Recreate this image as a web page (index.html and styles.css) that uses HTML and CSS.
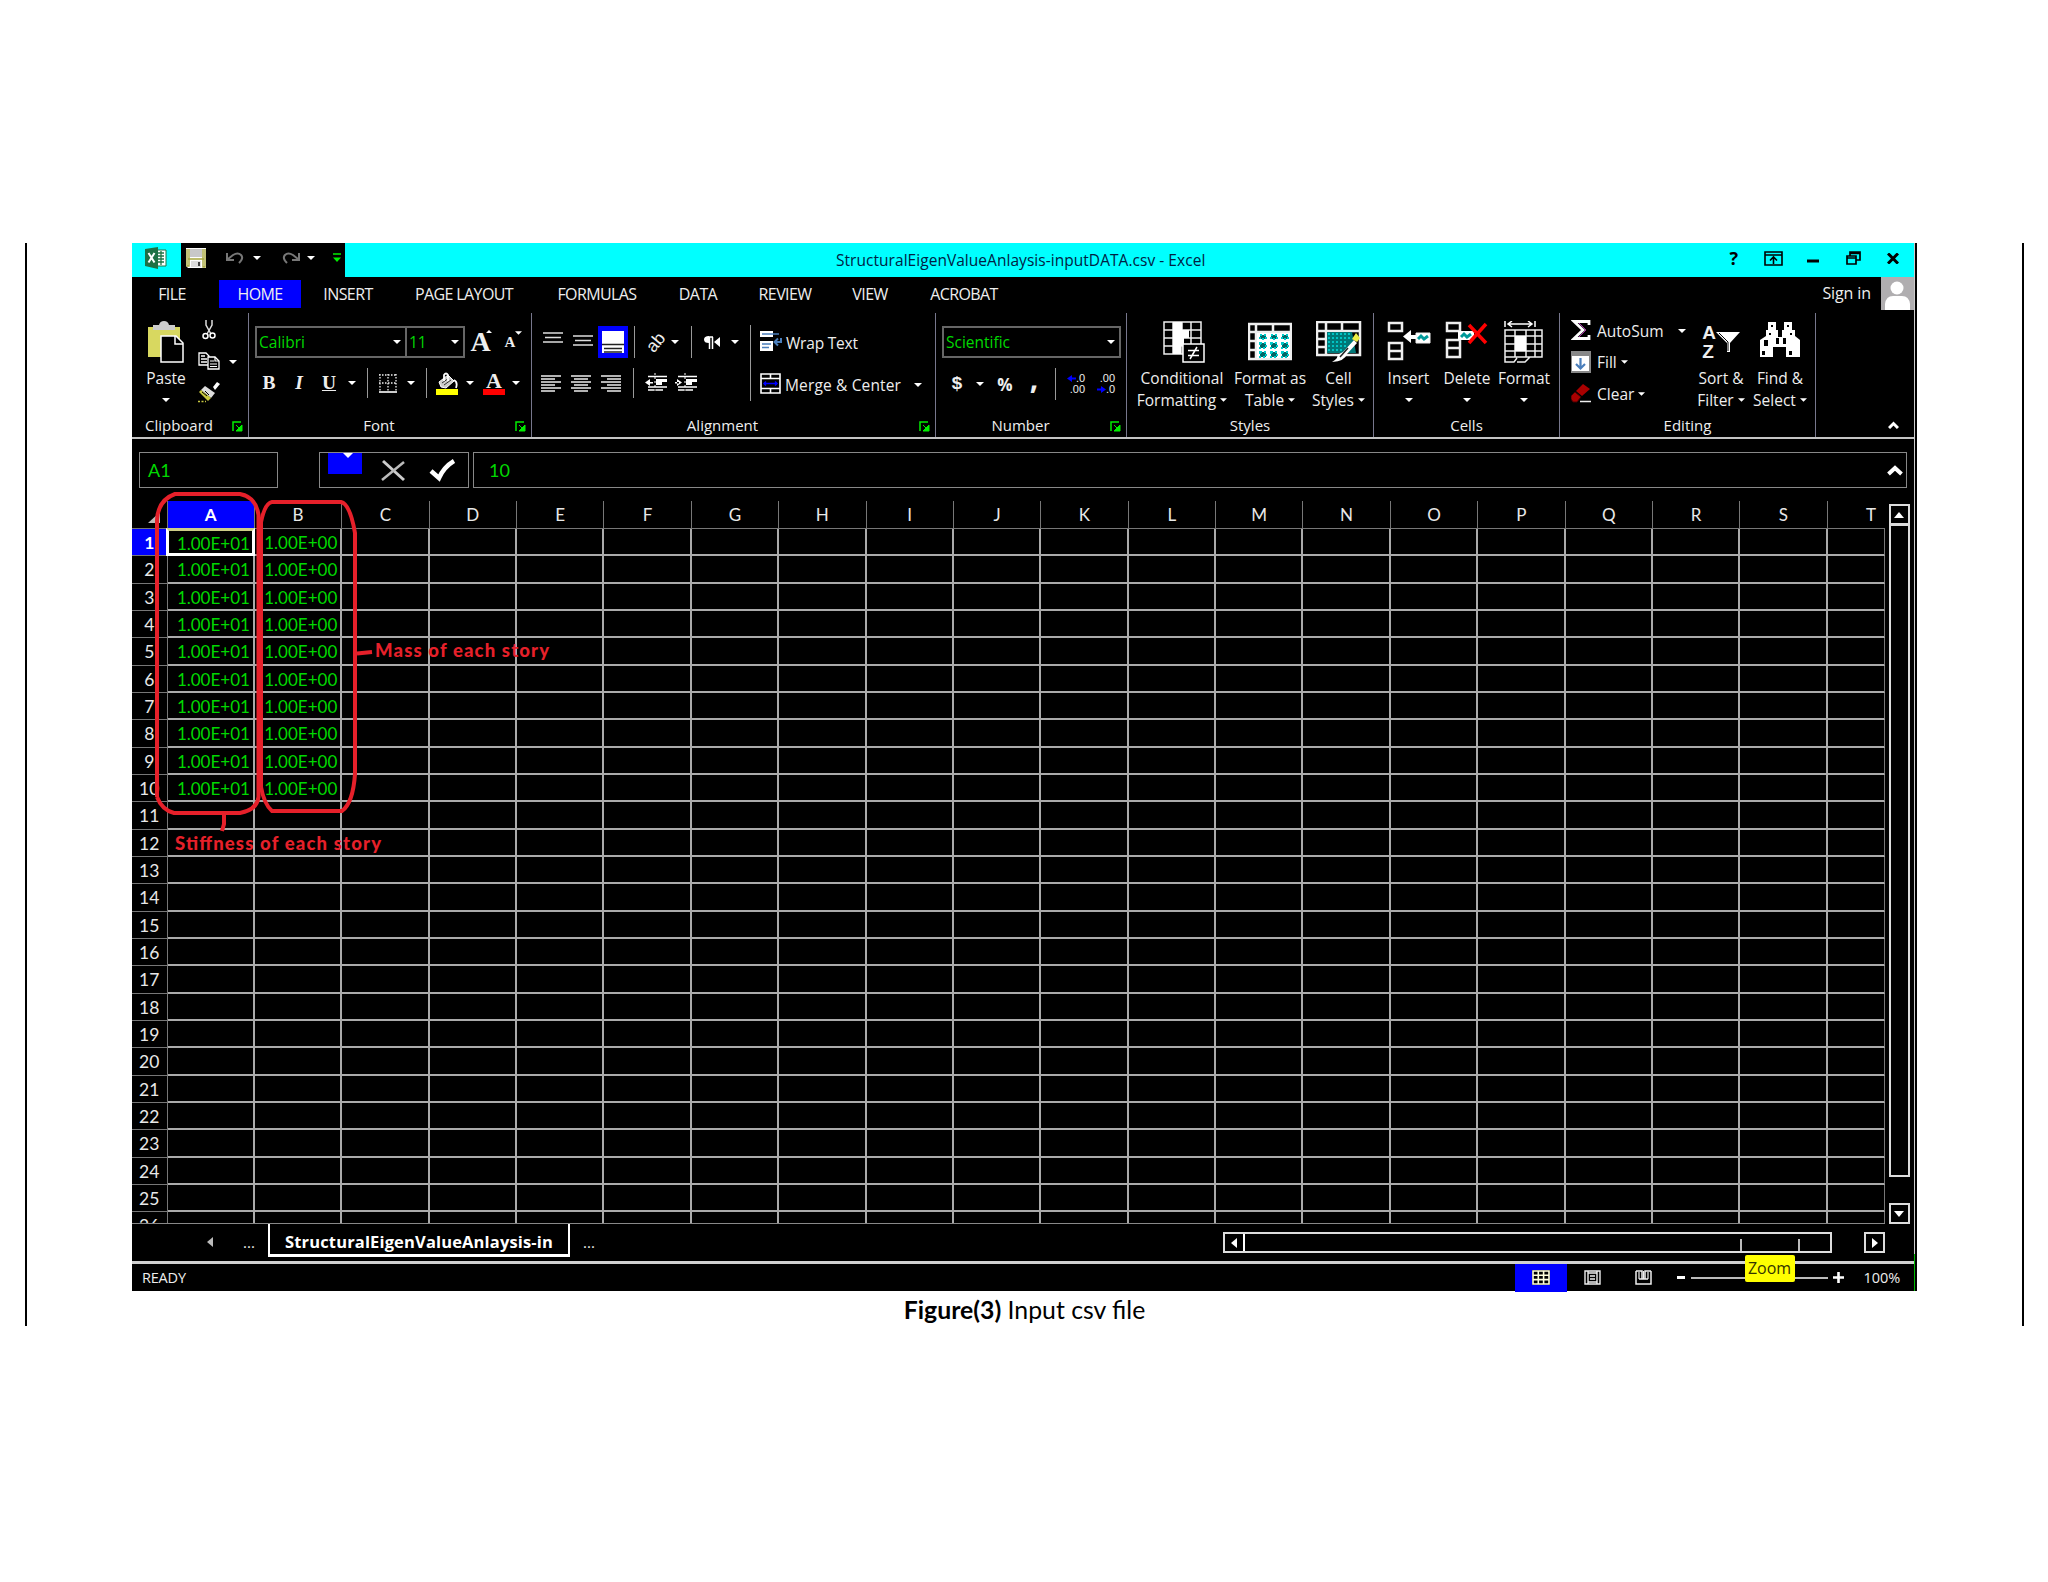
FILE: index.html
```html
<!DOCTYPE html>
<html lang="en">
<head>
  <meta charset="UTF-8">
  <title>Figure(3) Input csv file</title>
  <link rel="stylesheet" href="styles.css">
</head>
<body>

  <svg class="defs" width="0" height="0">
    <symbol id="down" viewBox="0 0 8 4"><path d="M0 0H8L4 4Z" fill="#fff"/></symbol>
    <symbol id="launch" viewBox="0 0 11 11"><path d="M1 10V1H9" fill="none" stroke="#0e0" stroke-width="1.5"/><path d="M4 4L8 8M10 4V10H4Z" fill="#0e0" stroke="#0e0"/></symbol>
  </svg>

  <main class="page">
    <div class="figure">
      <div class="window">

        <header class="titlebar">
          <div class="app-icon">
            <svg width="22" height="22" viewBox="0 0 22 22"><path d="M11 3H21V19H11Z" fill="#fff" stroke="#217346"/><path d="M13 6H19M13 9H19M13 12H19M13 15H19M16 4V18" stroke="#217346" stroke-width="1.3"/><path d="M0 2L13 0V22L0 19Z" fill="#1e7145"/><path d="M3.5 6L9.5 15.5M9.5 6L3.5 15.5" stroke="#fff" stroke-width="2"/></svg>
          </div>
          <div class="quick">
            <svg class="save" width="20" height="20" viewBox="0 0 20 20"><path d="M0 0H20V20H2L0 18Z" fill="#fff"/><path d="M1 1V18H3V1M19 1V19H17V1M2 11H18" fill="none" stroke="#a6a63c" stroke-width="1.4"/><path d="M4 1H16V9H4Z" fill="#c8c8c8"/><path d="M5 13H15V19H5Z" fill="#ddd"/><path d="M12 14H14V18H12Z" fill="#444"/></svg>
            <svg class="undo" width="18" height="12" viewBox="0 0 18 12"><path d="M1 1V8H8M2 7L7 3Q12 0 15 3Q18 6 13 11" fill="none" stroke="#777" stroke-width="2"/></svg>
            <svg class="undo-arrow" width="8" height="4"><use href="#down"/></svg>
            <svg class="redo" width="18" height="12" viewBox="0 0 18 12"><path d="M17 1V8H10M16 7L11 3Q6 0 3 3Q0 6 5 11" fill="none" stroke="#777" stroke-width="2"/></svg>
            <svg class="redo-arrow" width="8" height="4"><use href="#down"/></svg>
            <svg class="customize" width="8" height="9" viewBox="0 0 8 9"><path d="M0 1H8" stroke="#0e0" stroke-width="1.5"/><path d="M0 4.500H8L4 9Z" fill="#0e0"/></svg>
          </div>
          <div class="title">StructuralEigenValueAnlaysis-inputDATA.csv - Excel</div>
          <div class="controls">
            <b>?</b>
            <svg width="19" height="15" viewBox="0 0 19 15"><path d="M1 1H18V14H1ZM1 4H18M9.500 13V6M6 9.500L9.500 6L13 9.500" fill="none" stroke="#000" stroke-width="1.6"/></svg>
            <svg width="12" height="15" viewBox="0 0 12 15"><path d="M0 10H12" stroke="#000" stroke-width="3"/></svg>
            <svg width="15" height="14" viewBox="0 0 15 14"><path d="M1 5H10V13H1ZM1 7H10M4 5V1H14V9H10M4 2.500H14" fill="none" stroke="#000" stroke-width="1.7"/></svg>
            <svg width="12" height="11" viewBox="0 0 12 11"><path d="M1 0.500L11 10.500M11 0.500L1 10.500" stroke="#000" stroke-width="3"/></svg>
          </div>
        </header>

        <nav class="tabs">
          <span>FILE</span>
          <span class="active">HOME</span>
          <span>INSERT</span>
          <span>PAGE LAYOUT</span>
          <span>FORMULAS</span>
          <span>DATA</span>
          <span>REVIEW</span>
          <span>VIEW</span>
          <span>ACROBAT</span>
          <span class="signin">Sign in</span>
          <svg class="avatar" width="33" height="33" viewBox="0 0 33 33"><path d="M0 0H33V33H0Z" fill="#b0aeb0"/><circle cx="16" cy="11" r="6.500" fill="#fff"/><path d="M4 33V27Q5 19 12 19H21Q28 19 29 27V33Z" fill="#fff"/></svg>
        </nav>

        <section class="ribbon">
          <div class="group clipboard">
            <div class="tools">
              <div class="big">
                <svg width="38" height="42" viewBox="0 0 38 42"><path d="M1 6H33V36H1Z" fill="#d8d860"/><path d="M6 10V4H12Q13 0 17 0Q21 0 22 4H28V9H6Z" fill="#ccc"/><path d="M14 15H29L36 22V41H14Z" fill="#000" stroke="#fff" stroke-width="1.5"/><path d="M28 15V23H36" fill="none" stroke="#fff" stroke-width="1.5"/></svg>
                <span>Paste</span>
                <svg class="arrow" width="8" height="4"><use href="#down"/></svg>
              </div>
              <div class="small-col">
                <svg width="14" height="20" viewBox="0 0 14 20"><path d="M4 0V5L9 14M10 0V5L5 14" fill="none" stroke="#ddd" stroke-width="1.5"/><circle cx="3.500" cy="16" r="2.500" fill="none" stroke="#fff" stroke-width="1.500"/><circle cx="10.500" cy="15.500" r="2.500" fill="none" stroke="#fff" stroke-width="1.500"/></svg>
                <svg width="22" height="18" viewBox="0 0 22 18"><path d="M1 1H8L11 4V13H1ZM3 4H7M3 7H9M3 10H9" fill="none" stroke="#fff" stroke-width="1.300"/><path d="M10 5H17L21 9V17H10Z" fill="#000" stroke="#fff" stroke-width="1.300"/><path d="M12 9H16M12 12H19M12 14.500H19M17 5V9H21" fill="none" stroke="#fff" stroke-width="1.200"/></svg>
                <svg width="24" height="22" viewBox="0 0 24 22"><path d="M16 6L20 1L23 3L18 9Z" fill="#fff"/><path d="M8 5L18 12L14 17L4 9Z" fill="#ddd"/><path d="M4 9L14 17L11 20L2 11Z" fill="#c8c840"/><path d="M5 11L10 15M8 10L12 14" stroke="#000"/><path d="M1 20.500H9" stroke="#c8c840" stroke-width="1.500" stroke-dasharray="2 1.500"/></svg>
              </div>
              <svg class="copy-arrow" width="8" height="4"><use href="#down"/></svg>
            </div>
            <div class="caption">Clipboard<svg width="11" height="11"><use href="#launch"/></svg></div>
          </div>

          <div class="group font">
            <div class="rows">
              <div class="row row-top">
                <div class="combo">Calibri<svg width="8" height="4"><use href="#down"/></svg></div>
                <div class="combo size">11<svg width="8" height="4"><use href="#down"/></svg></div>
                <span class="grow">A<svg width="6" height="4" viewBox="0 0 6 4"><path d="M3 0L6 3H0Z" fill="#fff"/></svg></span>
                <span class="shrink">A<svg width="7" height="4"><use href="#down"/></svg></span>
              </div>
              <div class="row row-bottom">
                <b class="serif">B</b>
                <b class="serif"><i>I</i></b>
                <b class="serif"><u>U</u></b>
                <svg width="8" height="4"><use href="#down"/></svg>
                <i class="sep"></i>
                <svg width="18" height="19" viewBox="0 0 18 19"><path d="M0 1H18M0 9H18M1 0V17M9 0V17M17 0V17" stroke="#eee" stroke-width="1.300" stroke-dasharray="1.500 1.500"/><path d="M0 18H18" stroke="#fff" stroke-width="1.600"/></svg>
                <svg width="8" height="4"><use href="#down"/></svg>
                <i class="sep"></i>
                <svg width="23" height="23" viewBox="0 0 23 23"><path d="M3 10L12 3L18 9L10 16L5 15Z" fill="#ccc" stroke="#fff"/><path d="M6 11L13 6M8 13L15 8" stroke="#333"/><path d="M8 9V3Q10 0 12 3V9M18 8Q22 10 20 16" fill="none" stroke="#fff" stroke-width="1.800"/><path d="M0 17H22V23H0Z" fill="#ff0"/></svg>
                <svg width="8" height="4"><use href="#down"/></svg>
                <span class="fcolor">A</span>
                <svg width="8" height="4"><use href="#down"/></svg>
              </div>
            </div>
            <div class="caption">Font<svg width="11" height="11"><use href="#launch"/></svg></div>
          </div>

          <div class="group alignment">
            <div class="tools">
              <div class="rows">
                <div class="row row-top">
                  <svg class="valign-top" width="20" height="20" viewBox="0 0 20 20"><path d="M0 1H20M2 5.500H18M0 10H20" stroke="#ddd" stroke-width="1.600"/></svg>
                  <svg width="20" height="20" viewBox="0 0 20 20"><path d="M0 4H20M2 8.500H18M0 13H20" stroke="#ddd" stroke-width="1.600"/></svg>
                  <span class="pressed"><svg width="22" height="22" viewBox="0 0 22 22"><path d="M0 0H22V22H0Z" fill="#fff"/><path d="M0 13.500H22M2 17.500H20M2 21H20" stroke="#222" stroke-width="1.500"/></svg></span>
                  <i class="sep"></i>
                  <span class="orient">ab</span>
                  <svg width="8" height="4"><use href="#down"/></svg>
                  <i class="sep"></i>
                  <svg width="16" height="13" viewBox="0 0 16 13"><path d="M5.500 13V1H9M8.500 1V13" fill="none" stroke="#fff" stroke-width="1.500"/><path d="M5 0V7Q0 7 0 3.500Q0 0 5 0ZM16 1V11L10 6Z" fill="#fff"/></svg>
                  <svg width="8" height="4"><use href="#down"/></svg>
                </div>
                <div class="row row-bottom">
                  <svg width="20" height="17" viewBox="0 0 20 17"><path d="M0 1H20M0 4H14M0 7H20M0 10H14M0 13H20M0 16H14" stroke="#eee" stroke-width="1.600"/></svg>
                  <svg width="20" height="17" viewBox="0 0 20 17"><path d="M0 1H20M3 4H17M0 7H20M3 10H17M0 13H20M3 16H17" stroke="#eee" stroke-width="1.600"/></svg>
                  <svg width="20" height="17" viewBox="0 0 20 17"><path d="M0 1H20M6 4H20M0 7H20M6 10H20M0 13H20M6 16H20" stroke="#eee" stroke-width="1.600"/></svg>
                  <i class="sep"></i>
                  <svg width="22" height="20" viewBox="0 0 22 20"><path d="M3 3.500H22M11 7H22M3 14H22M3 17H9M11 17H18" stroke="#fff" stroke-width="1.500"/><path d="M11 6H22V9H17V12H11Z" fill="#fff"/><path d="M10 0V20" stroke="#fff" stroke-dasharray="2 2"/><path d="M0 9.500L5 6V13ZM4 9H8V10.500H4Z" fill="#fff"/></svg>
                  <svg width="22" height="20" viewBox="0 0 22 20"><path d="M3 3.500H22M11 7H22M3 14H22M3 17H9M11 17H18" stroke="#fff" stroke-width="1.500"/><path d="M11 6H22V9H17V12H11Z" fill="#fff"/><path d="M10 0V20" stroke="#fff" stroke-dasharray="2 2"/><path d="M7 9.500L2 6V13ZM0 9H4V10.500H0Z" fill="#fff"/></svg>
                </div>
              </div>
              <div class="wrap">
                <div class="wrap-row">
                  <svg width="22" height="22" viewBox="0 0 22 22"><path d="M0 1H13V7H0ZM0 11H13V21H0Z" fill="#fff"/><path d="M2 4H19M2 14H11M2 17.500H9" stroke="#4a7ebb" stroke-width="1.500"/><path d="M21 8V12H15M18 8.500L14.500 12L18 15.500" fill="none" stroke="#4a7ebb" stroke-width="2"/></svg>
                  <span>Wrap Text</span>
                </div>
                <div class="wrap-row merge">
                  <svg width="21" height="21" viewBox="0 0 21 21"><path d="M1 1H20V20H1ZM1 5.500H20M1 15.500H20M10.500 1V5M10.500 16V20" fill="none" stroke="#fff" stroke-width="1.600"/><path d="M4 10.500H17M6 8.500L4 10.500L6 12.500M15 8.500L17 10.500L15 12.500" fill="none" stroke="#00f" stroke-width="1.500"/></svg>
                  <span>Merge &amp; Center</span>
                  <svg class="arrow" width="8" height="4"><use href="#down"/></svg>
                </div>
              </div>
            </div>
            <div class="caption">Alignment<svg width="11" height="11"><use href="#launch"/></svg></div>
          </div>

          <div class="group number">
            <div class="rows">
              <div class="row row-top">
                <div class="combo">Scientific<svg width="8" height="4"><use href="#down"/></svg></div>
              </div>
              <div class="row row-bottom">
                <b class="dollar">$</b>
                <svg width="8" height="4"><use href="#down"/></svg>
                <b class="percent">%</b>
                <b class="comma">,</b>
                <i class="sep"></i>
                <span class="dec"><span><svg width="9" height="7" viewBox="0 0 9 7"><path d="M0 3.500L5 0V2.500H9V4.500H5V7Z" fill="#00f"/></svg>.0</span><span>.00</span></span>
                <span class="dec"><span>.00</span><span><svg width="9" height="7" viewBox="0 0 9 7"><path d="M9 3.500L4 0V2.500H0V4.500H4V7Z" fill="#00f"/></svg>.0</span></span>
              </div>
            </div>
            <div class="caption">Number<svg width="11" height="11"><use href="#launch"/></svg></div>
          </div>

          <div class="group styles">
            <div class="tools">
              <div class="big">
                <svg class="cond" width="42" height="42" viewBox="0 0 42 42"><path d="M1 1H38V33H1ZM1 9H38M1 17H38M1 25H38M10 1V33M19 1V33M28 1V33" fill="none" stroke="#eee" stroke-width="1.500"/><path d="M10 1H19V9H26V17H21V25H18V33H10Z" fill="#fff"/><path d="M20 23H41V41H20Z" fill="#000" stroke="#fff" stroke-width="1.500"/><path d="M25 29.500H36M25 34.500H36M34 26L27 38" stroke="#fff" stroke-width="1.500"/></svg>
                <span>Conditional</span>
                <span>Formatting <svg width="7" height="4"><use href="#down"/></svg></span>
              </div>
              <div class="big">
                <svg width="44" height="42" viewBox="0 0 44 42"><path d="M1 3H43V38H1ZM1 11H43M8 3V38M25 3V11M1 20H8M1 29H8" fill="none" stroke="#eee" stroke-width="2.500"/><path d="M9 12H42V37H9Z" fill="#fff"/><path d="M12 14H18V18H12ZM23 14H29V18H23ZM34 14H40V18H34ZM12 22H18V27H12ZM23 22H29V27H23ZM34 22H40V27H34ZM12 31H18V36H12ZM23 31H29V36H23ZM34 31H40V36H34Z" fill="#066" stroke="#0cc" stroke-width="2" stroke-dasharray="2 2"/></svg>
                <span>Format as</span>
                <span>Table <svg width="7" height="4"><use href="#down"/></svg></span>
              </div>
              <div class="big">
                <svg width="46" height="42" viewBox="0 0 46 42"><path d="M1 1H44V34H1ZM1 10H44M10 1V34M26 1V10M1 18H10M1 26H10" fill="none" stroke="#eee" stroke-width="2.500"/><path d="M11 11H36L40 32H11Z" fill="#077"/><path d="M12 13H36M12 17H34M12 21H32M12 25H30M12 29H28" stroke="#0dd" stroke-width="1.500" stroke-dasharray="2 2"/><path d="M27 31L38 19L41 22L31 33Q29 40 16 41Q23 37 21 34Z" fill="#fff"/><path d="M36 18L40 12L44 17L41 21Z" fill="#ee4"/><path d="M24 36L32 27" stroke="#222" stroke-width="1.500"/></svg>
                <span>Cell</span>
                <span>Styles <svg width="7" height="4"><use href="#down"/></svg></span>
              </div>
            </div>
            <div class="caption">Styles</div>
          </div>

          <div class="group cells">
            <div class="tools">
              <div class="big">
                <svg width="44" height="42" viewBox="0 0 44 42"><path d="M2 2H15V10H2ZM2 22H15V30H2ZM2 30H15V38H2Z" fill="none" stroke="#eee" stroke-width="2.500"/><path d="M29 12H43V22H29Z" fill="#fff" stroke="#eee"/><path d="M31 18L34 15L37 18L41 15" fill="none" stroke="#099" stroke-width="3"/><path d="M16 15.500L24 9V14H29V18H24V22Z" fill="#fff"/></svg>
                <span>Insert</span>
                <svg class="arrow" width="8" height="4"><use href="#down"/></svg>
              </div>
              <div class="big">
                <svg width="44" height="42" viewBox="0 0 44 42"><path d="M2 2H15V10H2ZM2 19H15V27H2ZM2 27H15V36H2Z" fill="none" stroke="#eee" stroke-width="2.500"/><path d="M13 10H29V19H13Z" fill="#fff"/><path d="M16 16L19 13L22 16L26 13" fill="none" stroke="#099" stroke-width="3"/><path d="M24 4L41 22M41 3L24 22" stroke="#f00" stroke-width="3.500"/></svg>
                <span>Delete</span>
                <svg class="arrow" width="8" height="4"><use href="#down"/></svg>
              </div>
              <div class="big">
                <svg width="40" height="42" viewBox="0 0 40 42"><path d="M1 0V6M31 0V6M5 3H27M8 0L4 3L8 6M24 0L28 3L24 6" fill="none" stroke="#fff" stroke-width="1.500"/><path d="M1 9H38V36H1ZM1 15H38M1 30H38M11 9V36M22 9V36M31 9V36M1 23H11M22 23H38M1 36V41H10L13 37M13 41H21L26 36" fill="none" stroke="#eee" stroke-width="1.500"/><path d="M11 15H22V30H11Z" fill="#fff"/></svg>
                <span>Format</span>
                <svg class="arrow" width="8" height="4"><use href="#down"/></svg>
              </div>
            </div>
            <div class="caption">Cells</div>
          </div>

          <div class="group editing">
            <div class="tools">
              <div class="edit-list">
                <div class="edit-row">
                  <svg width="20" height="21" viewBox="0 0 20 21"><path d="M18 5V1.500H3L12 10L3 18.500H18V15" fill="none" stroke="#fff" stroke-width="2.800"/><path d="M8 3L15 10L8 17" fill="none" stroke="#a3a" stroke-width="1"/></svg>
                  <span>AutoSum</span>
                  <svg class="sum-arrow" width="8" height="4"><use href="#down"/></svg>
                </div>
                <div class="edit-row">
                  <svg width="20" height="22" viewBox="0 0 20 22"><path d="M0 0H20V22H0Z" fill="#888"/><path d="M1 5H18V20H1Z" fill="#fff"/><path d="M9.500 7V17M5 13L9.500 17.500L14 13" fill="none" stroke="#4a7ebb" stroke-width="2.200"/></svg>
                  <span>Fill</span>
                  <svg width="7" height="4"><use href="#down"/></svg>
                </div>
                <div class="edit-row">
                  <svg width="20" height="19" viewBox="0 0 20 19"><path d="M5 7L12 0L19 5L11 12Z" fill="#a00"/><path d="M4 8L10 13L6 18H2L0 15V12Z" fill="#a00" stroke="#400"/><path d="M9 17.500H20" stroke="#eee" stroke-width="1.500"/></svg>
                  <span>Clear</span>
                  <svg width="7" height="4"><use href="#down"/></svg>
                </div>
              </div>
              <div class="big sort">
                <div class="sort-icon">
                  <span><b>A</b><b>Z</b></span>
                  <svg width="24" height="24" viewBox="0 0 24 24"><path d="M0 2H24L14 13V22H11V13Z" fill="#fff"/><path d="M3 3L12 12V21" fill="none" stroke="#000"/></svg>
                </div>
                <span>Sort &amp;</span>
                <span>Filter <svg width="7" height="4"><use href="#down"/></svg></span>
              </div>
              <div class="big find">
                <svg width="42" height="42" viewBox="0 0 42 42"><path d="M9 1H17V9H19V16H23V9H25V1H33V9H36V15L41 19V36H27V26H14V36H1V19L7 15V9H9Z" fill="#fff"/><path d="M12 4H14V6H12ZM28 4H30V6H28ZM10 12H12V14H10ZM31 12H33V14H31ZM5 19H9V25H5ZM17 17H20V23H17ZM24 17H27V23H24ZM3 30H6V34H3ZM30 30H33V34H30Z" fill="#000"/></svg>
                <span>Find &amp;</span>
                <span>Select <svg width="7" height="4"><use href="#down"/></svg></span>
              </div>
            </div>
            <div class="caption">Editing</div>
          </div>

          <div class="collapse"><svg width="11" height="8" viewBox="0 0 11 8"><path d="M1 7L5.500 2.500L10 7" fill="none" stroke="#fff" stroke-width="3"/></svg></div>
        </section>

        <section class="formula-bar">
          <div class="name-box">A1</div>
          <div class="fx">
            <span class="fx-drop"><svg width="10" height="5"><use href="#down"/></svg></span>
            <svg width="24" height="23" viewBox="0 0 24 23"><path d="M2 2L23 21" stroke="#ccc" stroke-width="3"/><path d="M23 3L1 21" stroke="#bbb" stroke-width="2.500"/></svg>
            <svg width="26" height="23" viewBox="0 0 26 23"><path d="M2 12L10 19Q15 8 25 2" fill="none" stroke="#fff" stroke-width="4.500"/></svg>
          </div>
          <div class="formula"><span>10</span><svg width="16" height="12" viewBox="0 0 16 12"><path d="M1.500 10L8 4L14.500 10" fill="none" stroke="#fff" stroke-width="4"/></svg></div>
        </section>

        <section class="sheet">
          <div class="grid" id="grid"></div>
          <div class="vscroll">
            <div class="sbtn"><svg width="10" height="6" viewBox="0 0 10 6"><path d="M5 0L10 6H0Z" fill="#fff"/></svg></div>
            <div class="vtrack"></div>
            <div class="sbtn end"><svg width="10" height="6" viewBox="0 0 10 6"><path d="M0 0H10L5 6Z" fill="#fff"/></svg></div>
          </div>
        </section>

        <section class="sheet-tabs">
          <div class="tab-nav">
            <svg width="6" height="10" viewBox="0 0 6 10"><path d="M6 0V10L0 5Z" fill="#bbb"/></svg>
            <span>...</span>
          </div>
          <div class="tab">StructuralEigenValueAnlaysis-in</div>
          <div class="tab-rest">
            <span>...</span>
            <div class="hscroll">
              <div class="hbtn"><svg width="6" height="10" viewBox="0 0 6 10"><path d="M6 0V10L0 5Z" fill="#fff"/></svg></div>
              <i></i><i></i>
            </div>
            <div class="sbtn"><svg width="6" height="10" viewBox="0 0 6 10"><path d="M0 0V10L6 5Z" fill="#fff"/></svg></div>
          </div>
        </section>

        <footer class="status">
          <span class="ready">READY</span>
          <span class="view on"><svg width="18" height="15" viewBox="0 0 18 15"><path d="M0 0H18V15H0Z" fill="#000"/><path d="M1 1H17V14H1ZM1 5.300H17M1 9.600H17M6.300 1V14M11.600 1V14" fill="none" stroke="#ffd" stroke-width="1.600"/></svg></span>
          <span class="view"><svg width="17" height="15" viewBox="0 0 17 15"><path d="M1 1H16V14H1ZM4 1V14M13 1V14M4 3H13V12H4M6 6H11M6 9H11" fill="none" stroke="#eee" stroke-width="1.400"/></svg></span>
          <span class="view"><svg width="17" height="15" viewBox="0 0 17 15"><path d="M1 1V14H16V1M1 1H7V9M4 9H13M10 9V1H16" fill="none" stroke="#eee" stroke-width="1.500"/><path d="M8.500 1V9M4 2V9M13 2V9" stroke="#eee" stroke-width="1.200"/></svg></span>
          <div class="zoom">
            <i class="minus"></i>
            <i class="line"></i>
            <svg width="11" height="11" viewBox="0 0 11 11"><path d="M5.500 0V11M0 5.500H11" stroke="#fff" stroke-width="2.600"/></svg>
            <span>100%</span>
            <div class="tip">Zoom</div>
          </div>
        </footer>

        <!-- hand-drawn marks over columns A and B -->
        <svg class="marks" width="1782" height="1048" viewBox="132 243 1782 1048">
          <path d="M157 797V520Q158 500 175 494H240Q256 497 258.500 515V797Q257 810 240 813H174Q162 810 157 797"/>
          <path d="M261 787V522Q265 503 272 502H341Q350 504 355 533V774Q353 803 342 811H272Q264 804 261 787"/>
          <path d="M357 653.500L372 652M224 814V824L222 831"/>
          <text x="375" y="657" textLength="174">Mass of each story</text>
          <text x="175" y="850" textLength="206">Stiffness of each story</text>
        </svg>
      </div>
      <div class="edge"></div>
    </div>
    <p class="legend"><b>Figure(3)</b> Input csv file</p>
  </main>

  <script src="script.js"></script>
</body>
</html>
```

FILE: styles.css
```css
* {
  box-sizing: border-box;
}

body {
  margin: 0;
  background: #fff;
  font-family: "Open Sans", "Noto Sans", sans-serif;
  font-size: 15.5px;
  color: #eee;
}

svg {
  display: block;
  flex: none;
}

.defs {
  position: absolute;
}

.page {
  width: 1999px;
  height: 1083px;
  margin: 243px 0 0 25px;
  border: solid #000;
  border-width: 0 2px;
}

.figure {
  display: flex;
  margin-left: 105px;
}

.window {
  position: relative;
  width: 1782px;
  height: 1048px;
  background: #000;
}

.edge {
  width: 3px;
  border-right: 2px solid #000;
  background: linear-gradient(#ccc 1011px, #0b0 1011px);
}

/* title bar */
.titlebar {
  display: flex;
  height: 34px;
  background: #0ff;
  color: #024;
}

.app-icon {
  width: 49px;
  padding: 4px 0 0 13px;
}

.quick {
  display: flex;
  align-items: center;
  width: 164px;
  padding: 0 0 5px 5px;
  background: #000;
}

.undo {
  margin-left: 20px;
}

.undo-arrow {
  margin-left: 9px;
}

.redo {
  margin-left: 21px;
}

.redo-arrow {
  margin-left: 7px;
}

.customize {
  margin-left: 18px;
}

.title {
  width: 1209px;
  padding-left: 491px;
  line-height: 35px;
  letter-spacing: 0.04px;
  white-space: nowrap;
}

.controls {
  display: grid;
  grid-template-columns: repeat(5, 39.8px);
  justify-items: center;
  align-items: center;
  margin-left: 160px;
  padding-bottom: 4px;
  color: #000;
}

.controls b {
  font-size: 18px;
}

/* ribbon tabs */
.tabs {
  display: grid;
  grid-template-columns: 87px 82px 94px 138px 128px 74px 100px 70px 118px 1fr 33px;
  height: 35px;
  line-height: 34px;
  font-size: 16px;
  text-align: center;
  letter-spacing: -0.6px;
}

.tabs span:first-child {
  padding-right: 7px;
}

.tabs .active {
  height: 28px;
  margin-top: 3px;
  line-height: 28px;
  background: #00f;
}

.tabs .signin {
  padding-right: 10px;
  line-height: 32px;
  text-align: right;
  letter-spacing: -0.1px;
}

/* ribbon */
.ribbon {
  display: grid;
  grid-template-columns: 117px 283px 404px 191px 247px 186px 256px 1fr;
  height: 127px;
  border-bottom: 2px solid #c4c4c4;
}

.group {
  display: flex;
  flex-direction: column;
  justify-content: space-between;
  margin-top: 1px;
  border-right: 1px solid #77778c;
}

.tools {
  display: flex;
}

.caption {
  position: relative;
  height: 23px;
  line-height: 23px;
  font-size: 15px;
  text-align: center;
}

.caption svg {
  position: absolute;
  right: 5px;
  top: 7px;
}

.clipboard .caption,
.font .caption {
  padding-right: 22px;
}

.alignment .caption {
  padding-right: 22px;
}

.number .caption {
  padding-right: 21px;
}

.big {
  display: flex;
  flex-direction: column;
  align-items: center;
  padding-top: 8px;
  line-height: 22px;
  white-space: nowrap;
}

.big > span {
  display: flex;
  align-items: center;
  gap: 4px;
}

.big > svg:first-child {
  margin-bottom: 4px;
}

.big .arrow {
  margin-top: 9px;
}

.big .cond {
  margin-left: 3px;
}

.clipboard .tools {
  display: grid;
  grid-template-columns: 60px 33px 16px;
}

.clipboard .big {
  width: 68px;
}

.small-col {
  display: grid;
  grid-template-rows: 34px 28px 34px;
  justify-items: center;
  align-items: center;
}

.copy-arrow {
  margin: 47px 0 0 4px;
}

.rows {
  padding-top: 13px;
}

.row {
  display: grid;
  justify-items: center;
  align-items: center;
}

.row-top {
  height: 32px;
  margin-bottom: 10px;
}

.row-bottom {
  height: 30px;
}

.combo {
  display: flex;
  justify-content: space-between;
  align-items: center;
  align-self: stretch;
  justify-self: stretch;
  padding: 0 4px 0 2px;
  border: 2px solid #666;
  color: #00d800;
}

.combo.size {
  border-left: 0;
}

.font .row-top {
  grid-template-columns: 152px 58px 32px 33px;
  padding-left: 6px;
}

.font .row-bottom {
  grid-template-columns: 30px 30px 30px 16px 14px 28px 18px 12px 30px 16px 32px 12px;
  padding-left: 5px;
}

.sep {
  align-self: stretch;
  width: 1px;
  background: #999;
}

.serif {
  font-family: "Liberation Serif", serif;
  font-size: 19.5px;
}

.grow,
.shrink {
  display: flex;
  font: bold 28px "Liberation Serif", serif;
}

.grow svg {
  margin: 4px 0 0 -5px;
}

.shrink {
  align-items: center;
  font-size: 15px;
}

.shrink svg {
  margin-top: -18px;
}

.fcolor {
  width: 22px;
  height: 23px;
  border-bottom: 6px solid #f00;
  font: bold 22px/17px "Liberation Serif", serif;
  text-align: center;
}

.alignment .rows {
  width: 218px;
}

.alignment .row-top {
  grid-template-columns: 30px 30px 30px 12px 29px 12px 20px 22px 24px;
  padding-left: 6px;
}

.alignment .row-bottom {
  grid-template-columns: 30px 30px 30px 15px 29px 31px;
  padding-left: 4px;
}

.pressed {
  padding: 5px 4px;
  height: 32px;
  background: #00f;
}

.orient {
  margin-left: 2px;
  font: 17.5px "Liberation Sans", sans-serif;
  transform: rotate(-50deg);
}

.wrap {
  margin-top: 12px;
  height: 76px;
  padding-left: 9px;
  border-left: 1px solid #999;
}

.wrap-row {
  display: flex;
  align-items: center;
  gap: 4px;
  height: 32px;
  letter-spacing: -0.2px;
}

.wrap-row span {
  width: 120px;
  padding-top: 3px;
  white-space: nowrap;
}

.merge {
  margin-top: 10px;
  letter-spacing: 0.15px;
}

.merge .arrow {
  margin: 3px 0 0 5px;
}

.number .rows {
  padding-left: 6px;
}

.number .row-top {
  width: 179px;
}

.number .row-bottom {
  grid-template-columns: 30px 16px 34px 24px 18px 24px 36px;
}

.dollar {
  font: bold 19px "Liberation Mono", monospace;
}

.percent {
  font-size: 17px;
}

.comma {
  padding-bottom: 12px;
  font-size: 30px;
  line-height: 20px;
}

.dec {
  display: flex;
  flex-direction: column;
  align-items: flex-end;
  font: 11px/11px "Liberation Sans", sans-serif;
}

.dec span {
  display: flex;
  align-items: center;
}

.styles .tools {
  display: grid;
  grid-template-columns: 110px 66px 71px;
}

.cells .tools {
  display: grid;
  grid-template-columns: 69px 48px 66px;
}

.editing .tools {
  display: grid;
  grid-template-columns: 131px 60px 58px;
}

.edit-list {
  padding: 2px 0 0 11px;
}

.edit-row {
  display: flex;
  align-items: center;
  gap: 6px;
  height: 31.5px;
}

.edit-row svg:last-child {
  margin-left: -2px;
}

.edit-row .sum-arrow:last-child {
  margin-left: 8px;
}

.sort-icon {
  display: flex;
  align-items: center;
  height: 42px;
  margin-bottom: 4px;
}

.sort-icon span {
  display: flex;
  flex-direction: column;
  font: 19px/19px "Liberation Sans", sans-serif;
}

.collapse {
  display: flex;
  justify-content: flex-end;
  align-items: flex-end;
  padding: 0 15px 8px 0;
}

/* formula bar */
.formula-bar {
  display: flex;
  height: 49px;
  padding: 13px 7px 0;
  font: 18px Lato, sans-serif;
  color: #00d800;
}

.name-box,
.fx,
.formula {
  display: flex;
  align-items: center;
  height: 36px;
  border: 1.5px solid #888;
}

.name-box {
  width: 139px;
  margin-right: 41px;
  padding-left: 8px;
}

.fx {
  width: 150px;
  margin-right: 4px;
  padding-left: 8px;
  gap: 24px;
}

.fx svg:nth-child(2) {
  margin-left: -5px;
}

.fx-drop {
  display: flex;
  align-self: flex-start;
  justify-content: center;
  width: 34px;
  height: 21px;
  padding-left: 6px;
  background: #00f;
}

.formula {
  flex: 1;
  justify-content: space-between;
  padding: 0 3px 0 15px;
}

/* sheet */
.sheet {
  display: flex;
  height: 736px;
  padding-top: 13px;
}

.grid {
  display: grid;
  grid-template-columns: 35.5px repeat(19, 87.38px) 57px;
  grid-template-rows: 28px repeat(26, 27.33px);
  width: 1753px;
  height: 723px;
  overflow: hidden;
  border-bottom: 1px solid #888;
  font: 17px/27px Lato, sans-serif;
}

.cell {
  padding-right: 3px;
  border: solid #aaa;
  border-width: 0 2px 2px 0;
  color: #00d800;
  text-align: right;
  white-space: nowrap;
}

.cell.last {
  border-right: 1px solid #777;
}

.col,
.num {
  border: solid #777;
  border-width: 0 1px 1px 0;
  color: #e8e8e8;
  text-align: center;
}

.col.last {
  padding-left: 30px;
  border-right: 0;
}

.num {
  font-size: 17.5px;
}

.col.on-head,
.num.on-head {
  background: #00f;
  color: #fff;
  font-weight: bold;
}

.corner {
  padding: 11px 0 0 16px;
  border: solid #777;
  border-width: 0 1px 1px 0;
}

.current {
  margin: -1px 0 0 -2px;
  padding-right: 2px;
  border: 3px solid #fff;
  border-top-color: #cc8;
  line-height: 25px;
}

.vscroll {
  display: flex;
  flex-direction: column;
  align-items: center;
  width: 20px;
  margin-left: 4px;
  padding-top: 3px;
}

.sbtn {
  display: flex;
  align-items: center;
  justify-content: center;
  flex: none;
  width: 21px;
  height: 21px;
  border: 2px solid #ddd;
}

.vtrack {
  width: 21px;
  height: 652px;
  border: 2px solid #ddd;
  border-top-width: 1px;
}

.end {
  margin-top: auto;
}

/* sheet tabs */
.sheet-tabs {
  display: flex;
  height: 40px;
  border-bottom: 3px solid #d0d0d0;
  font-size: 15px;
}

.tab-nav {
  display: flex;
  align-items: center;
  width: 136px;
  padding: 0 0 1px 75px;
}

.tab-nav span {
  margin-left: 30px;
}

.tab {
  width: 302px;
  height: 33px;
  border: solid #fff;
  border-width: 0 2px 3px;
  color: #fff;
  font-size: 16.5px;
  font-weight: bold;
  line-height: 35px;
  letter-spacing: 0.15px;
  text-align: center;
  white-space: nowrap;
}

.tab-rest {
  display: flex;
  flex: 1;
  padding-top: 8px;
}

.tab-rest > span {
  width: 653px;
  padding-left: 13px;
}

.hscroll {
  display: flex;
  align-items: flex-end;
  width: 609px;
  height: 21px;
  margin-right: 32px;
  border: 2px solid #ddd;
}

.hbtn {
  display: flex;
  align-items: center;
  justify-content: center;
  width: 20px;
  height: 17px;
  border-right: 2px solid #fff;
}

.hscroll i {
  width: 2px;
  height: 12px;
  margin-left: 495px;
  background: #bbb;
}

.hscroll i + i {
  margin-left: 56px;
}

/* status bar */
.status {
  display: flex;
  align-items: center;
  height: 27px;
  font-size: 14.5px;
}

.ready {
  width: 1383px;
  padding-left: 10px;
  letter-spacing: -0.2px;
}

.view {
  display: flex;
  align-items: center;
  justify-content: center;
  width: 51.5px;
  height: 27px;
}

.view.on {
  height: 28px;
  background: #00f;
}

.zoom {
  position: relative;
  display: flex;
  align-items: center;
  margin-left: 7px;
}

.minus {
  width: 8px;
  height: 3px;
  background: #fff;
}

.line {
  width: 137px;
  height: 2px;
  margin: 0 5px 0 6px;
  background: #bbb;
}

.zoom span {
  margin-left: 20px;
}

.tip {
  position: absolute;
  left: 68px;
  top: -13px;
  width: 50px;
  height: 27px;
  border-radius: 2px;
  background: #ff0;
  color: #330;
  font-size: 16px;
  line-height: 26px;
  text-align: center;
}

.marks {
  position: absolute;
  left: 0;
  top: 0;
}

.marks path {
  fill: none;
  stroke: #e6202a;
  stroke-width: 4;
}

.marks text {
  fill: #e6202a;
  font: 900 18.5px Lato, sans-serif;
}

.legend {
  margin: 4px 0 0;
  color: #000;
  font: 24.8px/30px Lato, sans-serif;
  text-align: center;
}
```

FILE: script.js
```js
const grid = document.getElementById("grid");
const letters = "ABCDEFGHIJKLMNOPQRST";

function add(className, text) {
  const el = document.createElement("div");
  el.className = className;
  el.textContent = text;
  grid.appendChild(el);
  return el;
}

add("corner", "").innerHTML =
  '<svg width="12" height="11" viewBox="0 0 12 11"><path d="M12 0V11H0Z" fill="#bbb"/></svg>';

for (const letter of letters) {
  add("col" + (letter === "A" ? " on-head" : "") + (letter === "T" ? " last" : ""), letter);
}

for (let row = 1; row <= 26; row++) {
  add("num" + (row === 1 ? " on-head" : ""), row);
  for (let c = 0; c < letters.length; c++) {
    let value = "";
    if (row <= 10 && c === 0) value = "1.00E+01";
    if (row <= 10 && c === 1) value = "1.00E+00";
    let cls = "cell";
    if (row === 1 && c === 0) cls += " current";
    if (c === letters.length - 1) cls += " last";
    add(cls, value);
  }
}
```
